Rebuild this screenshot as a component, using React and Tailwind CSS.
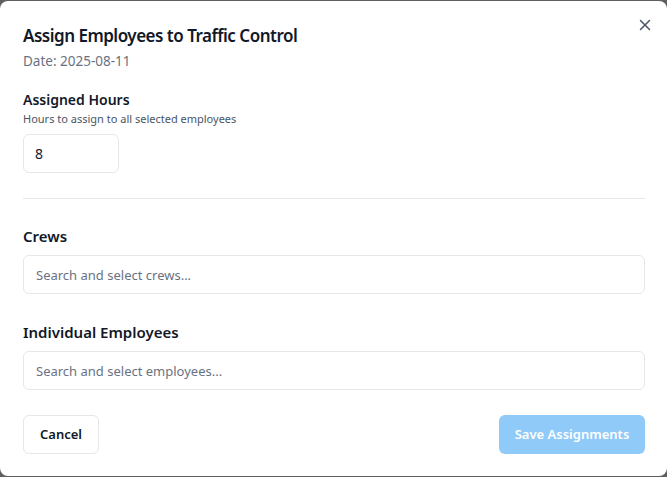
import React, { useState } from 'react';

const App = () => {
  const [hours, setHours] = useState('8');

  return (
    <div className="w-[667px] h-[477px] bg-[#5f5f5f] pt-[1px] overflow-hidden" style={{ fontFamily: '"Noto Sans", "Open Sans", sans-serif' }}>
      <div className="relative bg-white rounded-lg h-[475px] pl-[23px] pr-[22px] pt-[21px] text-[#111827]">
        <button className="absolute right-[11px] top-[13px] text-gray-600 p-1">
          <svg width="14" height="14" viewBox="0 0 14 14" fill="none" stroke="currentColor" strokeWidth="1.5" strokeLinecap="round">
            <path d="M2.5 2.5l9 9M11.5 2.5l-9 9" />
          </svg>
        </button>

        <h2 className="text-[17px] leading-[28px] font-semibold tracking-[-0.5px]">Assign Employees to Traffic Control</h2>
        <p className="text-[13.5px] leading-[20px] text-gray-500 mt-[1px]">Date: 2025-08-11</p>

        <div className="mt-[19px]">
          <label className="block text-[14px] leading-[20px] font-semibold">Assigned Hours</label>
          <p className="text-[11px] leading-[16px] text-gray-600 mt-[1px]">Hours to assign to all selected employees</p>
          <input
            type="text"
            value={hours}
            onChange={(e) => setHours(e.target.value)}
            className="mt-[7px] w-[96px] h-[39px] border border-gray-200 rounded-md px-[11px] text-[14px] text-[#111827] outline-none"
          />
        </div>

        <div className="h-px bg-gray-200 mt-[25px]"></div>

        <div className="mt-[26px]">
          <label className="block text-[15px] leading-[22px] font-semibold">Crews</label>
          <input
            type="text"
            placeholder="Search and select crews..."
            className="mt-[8px] w-full h-[39px] border border-gray-200 rounded-md px-[12px] text-[13px] placeholder:text-gray-500 outline-none"
          />
        </div>

        <div className="mt-[27px]">
          <label className="block text-[15px] leading-[22px] font-semibold">Individual Employees</label>
          <input
            type="text"
            placeholder="Search and select employees..."
            className="mt-[8px] w-full h-[39px] border border-gray-200 rounded-md px-[12px] text-[13px] placeholder:text-gray-500 outline-none"
          />
        </div>

        <div className="flex justify-between mt-[25px]">
          <button className="h-[39px] w-[76px] border border-gray-200 rounded-md text-[13px] font-semibold text-[#111827] bg-white">
            Cancel
          </button>
          <button disabled className="h-[39px] w-[146px] rounded-md text-[13px] font-semibold text-white bg-[#90caf9]">
            Save Assignments
          </button>
        </div>
      </div>
    </div>
  );
};

export default App;
